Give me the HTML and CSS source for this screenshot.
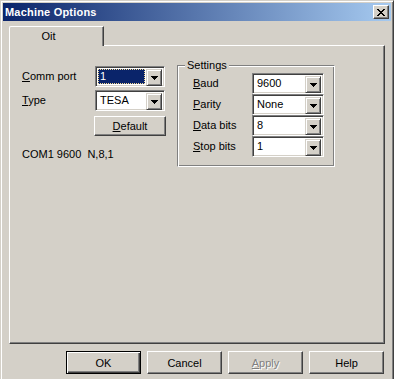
FILE: index.html
```html
<!DOCTYPE html>
<html lang="en">
<head>
  <title>Machine Options</title>
  <meta charset="UTF-8">
  <link rel="stylesheet" href="styles.css">
</head>
<body>
  <div class="window">
    <div class="titlebar">
      <span class="title">Machine Options</span>
      <button class="close-btn" type="button">
        <svg width="8" height="7" viewBox="0 0 8 7" shape-rendering="crispEdges">
          <path d="M0 0h2v1H0z M6 0h2v1H6z M1 1h2v1H1z M5 1h2v1H5z M2 2h4v1H2z M3 3h2v1H3z M2 4h4v1H2z M1 5h2v1H1z M5 5h2v1H5z M0 6h2v1H0z M6 6h2v1H6z" fill="#000"/>
        </svg>
      </button>
    </div>

    <div class="tabs">
      <div class="tab">Oit</div>
    </div>

    <div class="panel">
      <div class="left-col">
        <div class="field-row">
          <label class="field-label"><u>C</u>omm port</label>
          <div class="combo combo-focus">
            <span class="combo-value">1</span>
            <span class="combo-drop"><svg width="7" height="4" viewBox="0 0 7 4" shape-rendering="crispEdges"><path d="M0 0h7v1H0z M1 1h5v1H1z M2 2h3v1H2z M3 3h1v1H3z" fill="#000"/></svg></span>
          </div>
        </div>
        <div class="field-row">
          <label class="field-label"><u>T</u>ype</label>
          <div class="combo">
            <span class="combo-value">TESA</span>
            <span class="combo-drop"><svg width="7" height="4" viewBox="0 0 7 4" shape-rendering="crispEdges"><path d="M0 0h7v1H0z M1 1h5v1H1z M2 2h3v1H2z M3 3h1v1H3z" fill="#000"/></svg></span>
          </div>
        </div>
        <button class="btn default-btn" type="button"><u>D</u>efault</button>
        <div class="status">COM1 9600&nbsp; N,8,1</div>
      </div>

      <fieldset class="group">
        <legend class="group-title">Settings</legend>
        <div class="field-row group-row">
          <label class="group-label"><u>B</u>aud</label>
          <div class="combo combo-wide">
            <span class="combo-value">9600</span>
            <span class="combo-drop"><svg width="7" height="4" viewBox="0 0 7 4" shape-rendering="crispEdges"><path d="M0 0h7v1H0z M1 1h5v1H1z M2 2h3v1H2z M3 3h1v1H3z" fill="#000"/></svg></span>
          </div>
        </div>
        <div class="field-row group-row">
          <label class="group-label"><u>P</u>arity</label>
          <div class="combo combo-wide">
            <span class="combo-value">None</span>
            <span class="combo-drop"><svg width="7" height="4" viewBox="0 0 7 4" shape-rendering="crispEdges"><path d="M0 0h7v1H0z M1 1h5v1H1z M2 2h3v1H2z M3 3h1v1H3z" fill="#000"/></svg></span>
          </div>
        </div>
        <div class="field-row group-row">
          <label class="group-label"><u>D</u>ata bits</label>
          <div class="combo combo-wide">
            <span class="combo-value">8</span>
            <span class="combo-drop"><svg width="7" height="4" viewBox="0 0 7 4" shape-rendering="crispEdges"><path d="M0 0h7v1H0z M1 1h5v1H1z M2 2h3v1H2z M3 3h1v1H3z" fill="#000"/></svg></span>
          </div>
        </div>
        <div class="field-row group-row">
          <label class="group-label"><u>S</u>top bits</label>
          <div class="combo combo-wide">
            <span class="combo-value">1</span>
            <span class="combo-drop"><svg width="7" height="4" viewBox="0 0 7 4" shape-rendering="crispEdges"><path d="M0 0h7v1H0z M1 1h5v1H1z M2 2h3v1H2z M3 3h1v1H3z" fill="#000"/></svg></span>
          </div>
        </div>
      </fieldset>
    </div>

    <div class="button-row">
      <button class="btn btn-default" type="button">OK</button>
      <button class="btn" type="button">Cancel</button>
      <button class="btn btn-disabled" type="button"><u>A</u>pply</button>
      <button class="btn" type="button">Help</button>
    </div>
  </div>
</body>
</html>
```

FILE: styles.css
```css
:root {
  --face: #d4d0c8;
  --shadow: #808080;
  --dark-shadow: #404040;
  --highlight: #ffffff;
  --navy: #0a246a;
}

* {
  margin: 0;
  padding: 0;
  box-sizing: border-box;
}

body {
  background: var(--face);
  font-family: 'Liberation Sans', Arial, sans-serif;
  font-size: 11px;
  line-height: 13px;
  color: #000;
}

u {
  text-decoration: underline;
  text-underline-offset: 1px;
}

.window {
  width: 394px;
  height: 379px;
  background: var(--face);
  border-top: 1px solid var(--face);
  border-left: 1px solid var(--face);
  border-right: 1px solid var(--dark-shadow);
  box-shadow: inset 1px 1px 0 var(--highlight), inset -1px 0 0 var(--shadow);
  padding: 2px 2px 0 2px;
}

/* Title bar */
.titlebar {
  height: 18px;
  display: flex;
  align-items: center;
  justify-content: space-between;
  padding: 0 2px;
  background: linear-gradient(to right, #0a246a, #a6caf0);
}

.title {
  color: #fff;
  font-weight: bold;
  font-size: 11px;
  letter-spacing: 0.2px;
}

.close-btn {
  width: 16px;
  height: 14px;
  display: flex;
  align-items: center;
  justify-content: center;
  background: var(--face);
  border: 1px solid;
  border-color: var(--highlight) var(--dark-shadow) var(--dark-shadow) var(--highlight);
  box-shadow: inset -1px -1px 0 var(--shadow);
}

/* Tabs */
.tabs {
  display: flex;
  margin-top: 5px;
  padding-left: 6px;
}

.tab {
  position: relative;
  z-index: 1;
  width: 95px;
  height: 20px;
  margin-bottom: -1px;
  padding: 3px 16px 0 0;
  text-align: center;
  background: var(--face);
  border-top: 1px solid var(--highlight);
  border-left: 1px solid var(--highlight);
  border-right: 1px solid var(--dark-shadow);
  box-shadow: inset -1px 0 0 var(--shadow);
  border-top-left-radius: 2px;
}

.panel {
  display: flex;
  align-items: flex-start;
  height: 299px;
  margin: 0 6px;
  padding: 13px 0 0 12px;
  border: 1px solid;
  border-color: var(--highlight) var(--dark-shadow) var(--dark-shadow) var(--highlight);
  box-shadow: inset -1px -1px 0 var(--shadow);
}

/* Left column */
.left-col {
  width: 155px;
  padding-top: 7px;
  display: flex;
  flex-direction: column;
}

.field-row {
  display: flex;
  align-items: center;
  height: 21px;
}

.field-row + .field-row {
  margin-top: 3px;
}

.field-label {
  width: 73px;
}

.combo {
  width: 70px;
  height: 21px;
  display: flex;
  padding: 2px;
  background: #fff;
  border: 1px solid;
  border-color: var(--shadow) var(--highlight) var(--highlight) var(--shadow);
  box-shadow: inset 1px 1px 0 var(--dark-shadow), inset -1px -1px 0 var(--face);
}

.combo-wide {
  width: 72px;
}

.combo-value {
  flex: 1;
  padding-left: 2px;
  line-height: 15px;
}

.combo-focus .combo-value {
  margin-right: 1px;
  background: var(--navy);
  color: #fff;
  outline: 1px dotted #f5db95;
  outline-offset: -1px;
}

.combo-drop {
  width: 16px;
  height: 17px;
  display: flex;
  align-items: center;
  justify-content: center;
  background: var(--face);
  border: 1px solid;
  border-color: var(--face) var(--dark-shadow) var(--dark-shadow) var(--face);
  box-shadow: inset 1px 1px 0 var(--highlight), inset -1px -1px 0 var(--shadow);
}

.btn {
  width: 75px;
  height: 23px;
  background: var(--face);
  font-family: 'Liberation Sans', Arial, sans-serif;
  font-size: 11px;
  color: #000;
  border: 1px solid;
  border-color: var(--highlight) var(--dark-shadow) var(--dark-shadow) var(--highlight);
  box-shadow: inset -1px -1px 0 var(--shadow);
}

.default-btn {
  width: 72px;
  height: 20px;
  margin: 5px 0 0 72px;
}

.status {
  margin-top: 12px;
}

/* Settings group */
.group {
  width: 157px;
  padding: 0 10px 9px 15px;
  border: 1px solid;
  border-color: var(--shadow) var(--highlight) var(--highlight) var(--shadow);
  box-shadow: inset 1px 1px 0 var(--highlight), inset -1px -1px 0 var(--shadow);
}

.group-title {
  margin-left: -8px;
  padding: 0 2px;
  background: var(--face);
}

.group-row:first-of-type {
  margin-top: 1px;
}

.field-row.group-row + .field-row.group-row {
  margin-top: 0;
}

.group-label {
  width: 59px;
}

/* Bottom buttons */
.button-row {
  display: flex;
  justify-content: flex-end;
  gap: 6px;
  margin: 7px 7px 0 0;
}

.btn-default {
  border: 1px solid #000;
  box-shadow: inset 1px 1px 0 var(--highlight), inset -1px -1px 0 var(--dark-shadow), inset -2px -2px 0 var(--shadow);
}

.btn-disabled {
  color: var(--shadow);
  text-shadow: 1px 1px 0 var(--highlight);
}
```
